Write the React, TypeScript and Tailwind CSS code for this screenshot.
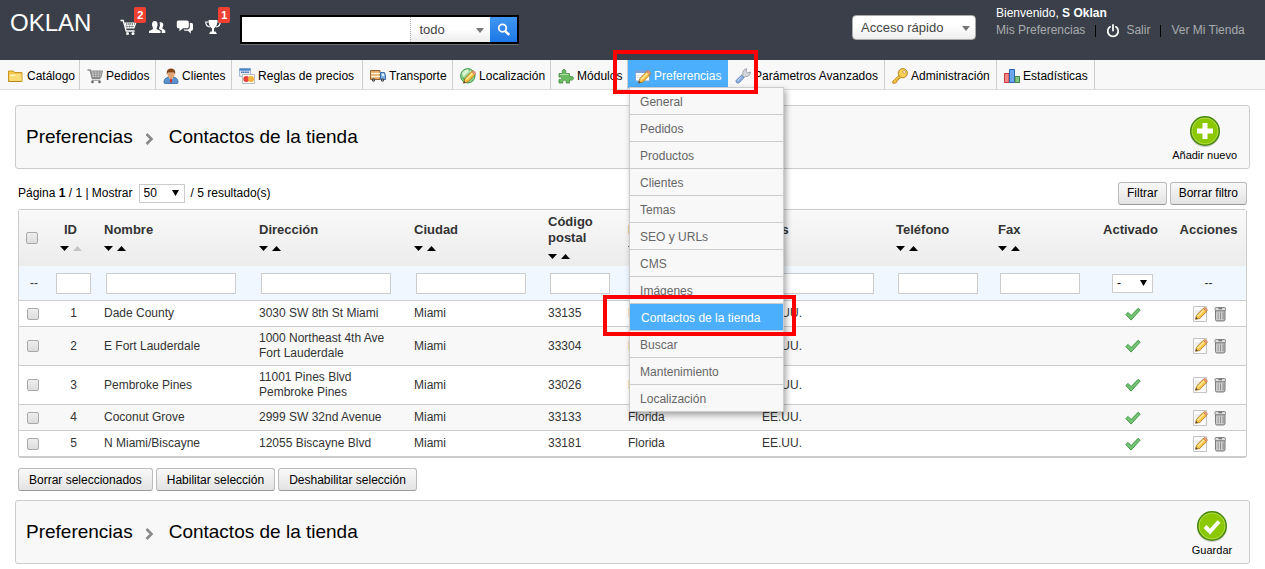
import { useState } from 'react';
import type { ReactNode } from 'react';

interface Contact {
    id: number;
    name: string;
    address: string[];
    city: string;
    zip: string;
    state: string;
    country: string;
}

const contacts: Contact[] = [
    { id: 1, name: 'Dade County', address: ['3030 SW 8th St Miami'], city: 'Miami', zip: '33135', state: 'Florida', country: 'EE.UU.' },
    { id: 2, name: 'E Fort Lauderdale', address: ['1000 Northeast 4th Ave', 'Fort Lauderdale'], city: 'Miami', zip: '33304', state: 'Florida', country: 'EE.UU.' },
    { id: 3, name: 'Pembroke Pines', address: ['11001 Pines Blvd', 'Pembroke Pines'], city: 'Miami', zip: '33026', state: 'Florida', country: 'EE.UU.' },
    { id: 4, name: 'Coconut Grove', address: ['2999 SW 32nd Avenue'], city: 'Miami', zip: '33133', state: 'Florida', country: 'EE.UU.' },
    { id: 5, name: 'N Miami/Biscayne', address: ['12055 Biscayne Blvd'], city: 'Miami', zip: '33181', state: 'Florida', country: 'EE.UU.' },
];

const columns = [
    { label: 'Nombre', input: 'w-[130px]' },
    { label: 'Dirección', input: 'w-[130px]' },
    { label: 'Ciudad', input: 'w-[110px]' },
    { label: 'Código postal', input: 'w-[60px]' },
    { label: 'Estado', input: 'w-[110px]' },
    { label: 'País', input: 'w-[110px]' },
    { label: 'Teléfono', input: 'w-[80px]' },
    { label: 'Fax', input: 'w-[80px]' },
];

const submenu = [
    'General', 'Pedidos', 'Productos', 'Clientes', 'Temas', 'SEO y URLs',
    'CMS', 'Imágenes', 'Contactos de la tienda', 'Buscar', 'Mantenimiento', 'Localización',
];

/* Icons */

const Icon = ({ children, className = 'size-4' }: { children: ReactNode; className?: string }) => (
    <svg viewBox="0 0 16 16" className={`${className} shrink-0`} aria-hidden="true">{children}</svg>
);

const FolderIcon = () => (
    <Icon>
        <path d="M.5 13.500v-10.500h5l1 1.500h7.500v9z" fill="#f5c84c" stroke="#c9952a" />
        <path d="M2 6.500h11v6H2z" fill="#fff6c9" />
        <path d="M1.500 13V8h5L8 6.500h5.500V13z" fill="#fbdc74" />
        <path d="M.5 13.500H14" stroke="#b98720" />
    </Icon>
);

const CartIcon = () => (
    <Icon>
        <path d="M.5 2h2.600l2.200 8.500h8" fill="none" stroke="#888" strokeWidth="1.300" />
        <path d="M3.700 3H15.500l-1.700 6.500H5.300z" fill="#d5d5d5" stroke="#888" />
        <path d="M4 5h11M4.600 7.200h10M7 3l.7 6.500M10 3v6.500M13 3l-.8 6.500" stroke="#888" strokeWidth=".8" />
        <path d="M4.500 12.500h9" stroke="#aaa" />
        <circle cx="5.500" cy="14" r="1.300" fill="#666" />
        <circle cx="12.500" cy="14" r="1.300" fill="#666" />
    </Icon>
);

const CustomerIcon = () => (
    <Icon>
        <path d="M1 14.500c0-4 2.500-5.500 7-5.500s7 1.500 7 5.500c0 .7-.5 1-1.200 1H2.200c-.7 0-1.200-.3-1.200-1z" fill="#5b93cf" stroke="#2f649f" strokeWidth=".8" />
        <path d="M6 9l2 5 2-5z" fill="#fff" />
        <path d="M7.400 10h1.200l.6 3.500L8 15l-1.200-1.500z" fill="#c33" />
        <path d="M4.500 4.500h7v2.700C11.500 9 10 10.500 8 10.500S4.500 9 4.500 7.200z" fill="#e0a573" />
        <path d="M3.800 6.500V4C4 1.800 5.500.6 8 .6s4 1.200 4.200 3.400v2.500l-1.200-2H5z" fill="#8a4516" />
    </Icon>
);

const PriceRulesIcon = () => (
    <Icon>
        <path d="M.5 .5h11v8H.5z" fill="#e8eef7" stroke="#a9bcd8" />
        <path d="M.5 .5h11v2.200H.5z" fill="#4a86cc" />
        <path d="M2 4.200h8" stroke="#3c64a8" strokeWidth="1.400" strokeDasharray="1.500 .6" />
        <path d="M3.500 6.500h12v9h-12z" fill="#fffdf3" stroke="#bbb" />
        <circle cx="7.300" cy="11" r="3" fill="#e8413c" />
        <circle cx="12" cy="11" r="3" fill="#f6b23e" />
    </Icon>
);

const TruckIcon = () => (
    <Icon>
        <path d="M.5 2.500h9.500v9H.5z" fill="#e3a968" stroke="#93642e" />
        <path d="M1 5.500h9M1 8.500h9" stroke="#fff1d2" strokeWidth="1.400" />
        <path d="M10.500 4.500h4l1 3.500v3.500h-5z" fill="#7fb0e6" stroke="#396ba5" />
        <path d="M12 5.500h1.800l.7 2.500H12z" fill="#e5f2ff" />
        <circle cx="3.500" cy="12" r="1.700" fill="#444" />
        <circle cx="12.500" cy="12" r="1.700" fill="#444" />
        <circle cx="3.500" cy="12" r=".6" fill="#ddd" />
        <circle cx="12.500" cy="12" r=".6" fill="#ddd" />
    </Icon>
);

const Pencil = () => (
    <>
        <path d="M3.500 15.200l1.300-4.500 7-7.200 3.300 3.100-7.200 7.300z" fill="#f7c443" stroke="#a36c1a" strokeWidth=".8" />
        <path d="M6.200 11.500L13 4.800" stroke="#ffe9a0" strokeWidth="1.400" />
        <path d="M11.600 3.900l1-1c.9-.8 3.600 1.700 2.900 2.700l-1 1.100z" fill="#eb9a77" stroke="#b96a3f" strokeWidth=".5" />
        <path d="M3.500 15.200l.6-2.200 1.700 1.500z" fill="#444" />
    </>
);

const GlobeIcon = () => (
    <Icon>
        <circle cx="7.800" cy="7.800" r="7.200" fill="#8fd08a" stroke="#3f9950" />
        <path d="M2 5c2-3 4-3.500 6-3.500L9 4 6 6.500 3.500 9zM10 2.500l3.500 3-1 3-3-1z" fill="#d9f2cf" />
        <path d="M2 9.500l4 1-1 3z" fill="#4fae56" />
        <Pencil />
    </Icon>
);

const PuzzleIcon = () => (
    <Icon>
        <path d="M1 5.500h3.600C3.500 3 4.500 1.500 6 1.500S8.500 3 7.600 5.500h3.900v3.300c2.200-1 4 0 4 1.500s-1.800 2.400-4 1.500V15H8c.8-1.800 0-2.800-1.500-2.800S4.200 13.300 5 15H1v-3.500c2 .5 2.800-.2 2.800-1.200S2.800 8.700 1 9.200z" fill="#6dbb62" stroke="#3f8a3d" strokeWidth=".8" />
        <path d="M2 6.500h8.500" stroke="#b4e2a8" />
    </Icon>
);

const PreferencesIcon = () => (
    <Icon>
        <path d="M.5 2.500h14v10.500H.5z" fill="#fdfdfd" stroke="#7ea6d6" />
        <path d="M.5 2h14v3H.5z" fill="#6ea2e0" />
        <path d="M2 7.500h6M2 9.500h5" stroke="#ddd" />
        <Pencil />
    </Icon>
);

const WrenchIcon = () => (
    <Icon>
        <path d="M8 6.500c-.8-2.600.8-5.300 3.700-5.800L11 3.500l1.600 1.400 2.700-.9c.3 3-2.300 5-4.800 4.300L9 9.500 6.800 7.500z" fill="#d6d9de" stroke="#8a8f98" strokeWidth=".8" />
        <path d="M6.600 7.200l2.400 2.300-4.600 5c-1.900 1.700-4.400-.5-3-2.500z" fill="#88ace0" stroke="#5379b4" strokeWidth=".8" />
        <path d="M6.500 8.700l-4 4.200" stroke="#cfe0f8" />
    </Icon>
);

const KeyIcon = () => (
    <Icon>
        <path d="M8.200 6.300l2 2-2.200 2.200H6.500V12H5v1.700l-1.500 1.500H.8v-2z" fill="#f6c544" stroke="#b07a18" strokeWidth=".8" />
        <circle cx="10.800" cy="5.200" r="4.600" fill="#f9cf55" stroke="#b07a18" strokeWidth=".9" />
        <circle cx="12.200" cy="3.900" r="1.300" fill="#fff" stroke="#b07a18" strokeWidth=".6" />
    </Icon>
);

const StatsIcon = () => (
    <Icon>
        <path d="M.5 5.500h4.500v9H.5z" fill="#f48888" stroke="#c93c3c" />
        <path d="M5.500 1.500H10.500v13H5.500z" fill="#6aa6ee" stroke="#2b62ae" />
        <path d="M11 8.500h4.500v6H11z" fill="#84c684" stroke="#3f8547" />
    </Icon>
);

const CheckIcon = () => (
    <Icon>
        <path d="M.8 8.600l2.300-2.200 3 3.200 7-7.300 2.100 1.800-9.100 10z" fill="#72c472" stroke="#3a8f42" strokeWidth=".9" />
    </Icon>
);

const EditIcon = () => (
    <Icon>
        <path d="M1.500 .5h13v15h-13z" fill="#fbfbfb" stroke="#c4c4c4" />
        <path d="M3 5h5M3 7h3" stroke="#e0e0e0" />
        <path d="M3.500 13.300l1-4 6.800-7 3.500 3.200-7.100 7z" fill="#f9c64a" stroke="#a36c1a" strokeWidth=".8" />
        <path d="M5.800 10.200L12.500 3.600" stroke="#ffe9a0" strokeWidth="1.400" />
        <path d="M11.200 2.500l.9-.9c.9-.8 3.900 1.900 3.300 2.900l-1 1z" fill="#ee9f76" stroke="#b96a3f" strokeWidth=".5" />
        <path d="M3.500 13.300l.5-2.200 1.900 1.700z" fill="#444" />
    </Icon>
);

const TrashIcon = () => (
    <Icon>
        <path d="M3.500 3.500h9.500V13.500c0 1-.8 1.500-1.800 1.500H5.300c-1.200 0-1.800-.5-1.800-1.500z" fill="#b9b9b9" stroke="#6f6f6f" strokeWidth=".9" />
        <rect x="3" y="1.500" width="10.500" height="3.200" rx="1.200" fill="#dedede" stroke="#777" strokeWidth=".9" />
        <path d="M6.500 2.700h3.500" stroke="#555" />
        <path d="M6 6.500v6.500M8.500 6.500v6.500M11 6.500v6.500" stroke="#858585" strokeWidth=".9" />
        <path d="M5 6v8M7.300 6v8M9.800 6v8" stroke="#e6e6e6" strokeWidth=".8" />
    </Icon>
);

const HeaderCartIcon = () => (
    <svg viewBox="0 0 18 18" className="size-[18px]" aria-hidden="true">
        <path d="M.5 2.500h2.700l3 10.500h8.500" fill="none" stroke="#fff" strokeWidth="1.300" />
        <path d="M4.500 4.500h12l-2 6H6z" fill="#fff" />
        <path d="M6 6h9M6.500 8.500h8" stroke="#3a3f49" strokeDasharray="1 1" />
        <path d="M7 5v5M9.500 5v5M12 5v5" stroke="#3a3f49" strokeWidth=".4" />
        <circle cx="7.500" cy="15.500" r="1.500" fill="#fff" />
        <circle cx="13" cy="15.500" r="1.500" fill="#fff" />
    </svg>
);

const HeaderPeopleIcon = () => (
    <svg viewBox="0 0 18 18" className="size-[18px]" fill="#fff" aria-hidden="true">
        <path d="M1 15v-2c1.500-.8 3-1.500 4-2 .5-1-1-2.300-1-4.500C4 4 5.200 3 6.800 3s2.800 1 2.800 3.500c0 2.200-1.400 3.500-1 4.500 1 .5 2.900 1.200 3.900 2v2z" />
        <path d="M11.500 4.500c2.300-.9 4 .5 3.800 2.500-.1 1.600-1.200 2.500-.9 3.500.9.700 2.300 1.500 2.900 2.300V15h-3.500v-2.600l-2.800-1.500c-.3-.8.900-2 1-3.900z" />
    </svg>
);

const HeaderChatIcon = () => (
    <svg viewBox="0 0 18 18" className="size-[18px]" fill="#fff" aria-hidden="true">
        <path d="M2.500 2.500h8.500c1 0 1.800.8 1.800 1.800v4.200c0 1-.8 1.800-1.800 1.800H7l-3.500 3v-3h-1c-1 0-1.700-.8-1.700-1.800V4.300c0-1 .7-1.800 1.700-1.800z" />
        <path d="M13.800 5h1.500c1 0 1.700.7 1.700 1.700v4.300c0 1-.7 1.700-1.700 1.700h-.5V15.500l-3-2.800H8.500l-1-1.200h3.800c1.500 0 2.500-1 2.500-2.500z" />
    </svg>
);

const HeaderTrophyIcon = () => (
    <svg viewBox="0 0 18 18" className="size-[18px]" fill="#fff" aria-hidden="true">
        <path d="M4.500 2h9c0 4-1 7-3.500 8.500v3h1.500l1.500 2.500H5l1.500-2.500H8v-3C5.500 9 4.500 6 4.500 2z" />
        <path d="M4.500 4H1.700c.1 3 1.500 4.700 4.300 5M13.500 4h2.800c-.1 3-1.500 4.700-4.300 5" fill="none" stroke="#fff" strokeWidth="1.200" />
    </svg>
);

const PowerIcon = () => (
    <Icon className="size-[14px]">
        <path d="M4.700 3.200a6 6 0 1 0 6.600 0" fill="none" stroke="#fff" strokeWidth="2" strokeLinecap="round" />
        <path d="M8 1v6.500" stroke="#fff" strokeWidth="2" strokeLinecap="round" />
    </Icon>
);

const SearchIcon = () => (
    <Icon className="size-[14px]">
        <circle cx="6.300" cy="5.800" r="4.300" fill="none" stroke="#fff" strokeWidth="2" />
        <path d="M9.500 9.200l4.500 4.500" stroke="#fff" strokeWidth="2.800" />
    </Icon>
);

const RoundIcon = ({ children }: { children: ReactNode }) => (
    <svg viewBox="0 0 32 32" className="size-8" aria-hidden="true">
        <ellipse cx="16" cy="17.500" rx="15" ry="14.500" fill="#ccc" />
        <circle cx="16" cy="16" r="15" fill="#458807" />
        <circle cx="16" cy="16" r="13.500" fill="#b4dc4e" />
        <circle cx="16" cy="16" r="12.500" fill="#8cc800" />
        {children}
    </svg>
);

const ChevronIcon = () => (
    <svg viewBox="0 0 9 12" className="mt-1 h-3 w-[9px]" aria-hidden="true">
        <path d="M1.500 1l5 5-5 5" fill="none" stroke="#888" strokeWidth="2.600" />
    </svg>
);

/* Shared bits */

const SortArrows = ({ sorted = false }: { sorted?: boolean }) => (
    <svg viewBox="0 0 22 5" className="mt-2 mb-1 block h-[5px] w-[22px]" aria-hidden="true">
        <path d="M0 0h9L4.500 5z" fill="#000" />
        <path d="M13 5h9L17.500 0z" fill={sorted ? '#c4c4c4' : '#000'} />
    </svg>
);

const Button = ({ children, className = 'px-2' }: { children: ReactNode; className?: string }) => (
    <button
        type="button"
        className={`h-[23px] rounded-[3px] border border-[#bbb] border-b-[#999] bg-linear-to-b from-[#f9f9f9] to-[#e3e3e3] text-black ${className}`}
    >
        {children}
    </button>
);

const Checkbox = ({ label }: { label: string }) => (
    <input
        type="checkbox"
        aria-label={label}
        className="block size-3 appearance-none rounded-[2px] border border-[#a9a9a9] bg-linear-to-b from-[#eee] to-[#dcdcdc] checked:from-[#4baffe] checked:to-[#4baffe]"
    />
);

const SmallSelect = ({ label, options, className }: { label: string; options: string[]; className: string }) => (
    <span className="relative inline-block align-middle">
        <select aria-label={label} className={`block h-[19px] appearance-none border border-[#ccc] bg-white pl-1 text-black ${className}`}>
            {options.map((option) => (
                <option key={option}>{option}</option>
            ))}
        </select>
        <svg viewBox="0 0 7 6" className="pointer-events-none absolute top-[6px] right-[6px] h-[6px] w-[7px]" aria-hidden="true">
            <path d="M0 0h7L3.500 6z" fill="#000" />
        </svg>
    </span>
);

const CaretDown = () => (
    <svg viewBox="0 0 8 5" className="pointer-events-none absolute top-1/2 right-[6px] -mt-[2px] h-[5px] w-2" aria-hidden="true">
        <path d="M0 0h8L4 5z" fill="#777" />
    </svg>
);

const NavItem = ({ icon, label, width }: { icon: ReactNode; label: string; width: string }) => (
    <li className={`border-r border-[#ccc] ${width}`}>
        <a href="#" className="flex h-[29px] items-center gap-[3px] pt-[2px] pr-1 pl-[7px] text-black">
            {icon}
            {label}
        </a>
    </li>
);

const TitleBar = ({ icon, action }: { icon: ReactNode; action: string }) => (
    <div className="flex h-16 items-center justify-between rounded-[3px] border border-[#ccc] bg-[#f8f8f8] pr-3 pl-[10px] text-black">
        <h2 className="flex items-center text-[19px]">
            Preferencias
            <span className="mr-[15px] ml-3">
                <ChevronIcon />
            </span>
            Contactos de la tienda
        </h2>
        <button type="button" className="flex min-w-[50px] flex-col items-center pt-1 text-[11px] leading-4">
            {icon}
            {action}
        </button>
    </div>
);

const HeaderBar = () => (
    <header className="flex h-[60px] items-start bg-[#3a3f49] pl-[10px] text-[13px]">
        <a href="#" className="pt-[7px] text-2xl text-white">OKLAN</a>
        <div className="mt-[18px] ml-[29px] flex gap-[10px]">
            <a href="#" className="relative" aria-label="Pedidos nuevos">
                <HeaderCartIcon />
                <span className="absolute -top-[11px] left-[14px] h-4 w-3 rounded-[2px] bg-[#ef4031] text-center text-[11px] leading-4 font-bold text-white">2</span>
            </a>
            <a href="#" aria-label="Clientes nuevos"><HeaderPeopleIcon /></a>
            <a href="#" aria-label="Mensajes"><HeaderChatIcon /></a>
            <a href="#" className="relative" aria-label="Logros">
                <HeaderTrophyIcon />
                <span className="absolute -top-[11px] left-[14px] h-4 w-3 rounded-[2px] bg-[#ef4031] text-center text-[11px] leading-4 font-bold text-white">1</span>
            </a>
        </div>
        <form className="mt-[15px] ml-[18px] flex h-[29px] border-2 border-black bg-white shadow-[0_1px_0_#6b6b6b]">
            <input type="text" aria-label="Buscar" className="w-[168px] px-2 outline-none" />
            <span className="relative border-l border-dotted border-[#aaa] bg-linear-to-b from-white from-50% to-[#ececec]">
                <select aria-label="Buscar en" className="h-full w-[79px] appearance-none pl-2 text-[#444]">
                    <option>todo</option>
                </select>
                <CaretDown />
            </span>
            <button type="button" aria-label="Buscar" className="flex w-[27px] items-center justify-center bg-linear-to-b from-[#3f95ef] to-[#1d78e6]">
                <SearchIcon />
            </button>
        </form>
        <span className="relative mt-[15px] mr-5 ml-auto">
            <select aria-label="Acceso rápido" className="block h-[25px] w-[124px] appearance-none rounded-[4px] border border-[#aaa] bg-linear-to-b from-white from-40% to-[#eee] pl-2 text-[#444]">
                <option>Acceso rápido</option>
            </select>
            <CaretDown />
        </span>
        <div className="w-[269px] pt-[5px] text-xs leading-[17px]">
            <p className="text-white">Bienvenido, <b>S Oklan</b></p>
            <p className="flex items-center text-[#a9abb0]">
                <a href="#">Mis Preferencias</a>
                <span className="mx-[10px] h-3 w-px bg-black" />
                <PowerIcon />
                <a href="#" className="ml-[6px]">Salir</a>
                <span className="mx-[10px] h-3 w-px bg-black" />
                <a href="#">Ver Mi Tienda</a>
            </p>
        </div>
    </header>
);

const PreferencesMenu = () => (
    <li className="relative min-w-[100px]">
        <a href="#" className="flex h-7 items-center gap-[3px] bg-[#4baffe] pt-1 pr-1 pl-[7px] text-white">
            <PreferencesIcon />
            Preferencias
        </a>
        <ul className="absolute top-[27px] left-px z-10 w-[155px] border border-[#ccc] bg-[#f8f8f8] shadow-[2px_3px_6px_rgba(0,0,0,0.35)]">
            {submenu.map((item) => (
                <li key={item} className="relative border-b border-[#ccc] last:border-b-0">
                    {item === 'Contactos de la tienda' ? (
                        <>
                            <a href="#" className="block h-[26px] bg-[#4baffe] pl-[11px] leading-[28px] text-white">{item}</a>
                            <span className="pointer-events-none absolute -top-[9px] -right-[13px] -left-[27px] h-[41px] border-4 border-[#f00]" />
                        </>
                    ) : (
                        <a href="#" className="block h-[26px] pl-[10px] leading-[28px] text-[#666]">{item}</a>
                    )}
                </li>
            ))}
        </ul>
        <span className="pointer-events-none absolute -top-[10px] -right-[30px] -left-[15px] z-20 h-11 border-4 border-[#f00]" />
    </li>
);

const App = () => {
    const [pageSize] = useState('50');

    return (
        <div className="bg-white font-['Liberation_Sans',Arial,sans-serif] text-xs text-[#333]">
            <HeaderBar />
            <nav className="border-b border-[#ddd] bg-[#f8f8f8] pl-px">
                <ul className="flex whitespace-nowrap">
                    <NavItem icon={<FolderIcon />} label="Catálogo" width="min-w-[79px]" />
                    <NavItem icon={<CartIcon />} label="Pedidos" width="min-w-[76px]" />
                    <NavItem icon={<CustomerIcon />} label="Clientes" width="min-w-[76px]" />
                    <NavItem icon={<PriceRulesIcon />} label="Reglas de precios" width="min-w-[131px]" />
                    <NavItem icon={<TruckIcon />} label="Transporte" width="min-w-[90px]" />
                    <NavItem icon={<GlobeIcon />} label="Localización" width="min-w-[98px]" />
                    <NavItem icon={<PuzzleIcon />} label="Módulos" width="min-w-[77px]" />
                    <PreferencesMenu />
                    <NavItem icon={<WrenchIcon />} label="Parámetros Avanzados" width="min-w-[157px]" />
                    <NavItem icon={<KeyIcon />} label="Administración" width="min-w-[112px]" />
                    <NavItem icon={<StatsIcon />} label="Estadísticas" width="min-w-[98px]" />
                </ul>
            </nav>

            <main className="px-[15px] pt-[15px] pb-[5px]">
                <TitleBar
                    action="Añadir nuevo"
                    icon={<RoundIcon><path d="M16 8v16M8 16h16" stroke="#fff" strokeWidth="5" /></RoundIcon>}
                />

                <div className="mx-[3px] flex h-10 items-center justify-between pt-2 text-black">
                    <div className="flex items-center gap-[6px]">
                        <span>Página <b>1</b> / 1 | Mostrar</span>
                        <SmallSelect label="Mostrar" options={[pageSize]} className="w-[46px]" />
                        <span>/ 5 resultado(s)</span>
                    </div>
                    <div className="flex gap-[3px]">
                        <Button>Filtrar</Button>
                        <Button>Borrar filtro</Button>
                    </div>
                </div>

                {/* Contacts table */}
                <div className="mx-[3px] rounded-[3px] border border-b-2 border-[#ccc]">
                    <table className="w-full table-fixed border-separate border-spacing-0 text-left leading-[15px]">
                        <colgroup>
                            <col className="w-[30px]" />
                            <col className="w-[49px]" />
                            <col className="w-[155px]" />
                            <col className="w-[155px]" />
                            <col className="w-[134px]" />
                            <col className="w-[80px]" />
                            <col className="w-[134px]" />
                            <col className="w-[134px]" />
                            <col className="w-[102px]" />
                            <col className="w-[102px]" />
                            <col className="w-[77px]" />
                            <col className="w-[75px]" />
                        </colgroup>
                        <thead>
                            <tr className="h-14 bg-linear-to-b from-[#f9f9f9] to-[#ececec] text-[13px] leading-4">
                                <th className="pl-[7px]"><Checkbox label="Seleccionar todo" /></th>
                                <th>
                                    <span className="flex flex-col items-center pr-[6px]">
                                        ID
                                        <SortArrows sorted />
                                    </span>
                                </th>
                                {columns.map((column) => (
                                    <th key={column.label} className="pr-1 pl-[6px]">
                                        {column.label}
                                        <SortArrows />
                                    </th>
                                ))}
                                <th className="pr-1 pb-4 text-center">Activado</th>
                                <th className="pb-4 text-center">Acciones</th>
                            </tr>
                        </thead>
                        <tbody>
                            <tr className="h-[35px] bg-[#f0f7fe] *:border-b *:border-[#ccc]">
                                <td className="text-center">--</td>
                                <td className="pl-[7px]">
                                    <input type="text" aria-label="Filtrar ID" className="block h-[21px] w-[35px] border border-[#ccc] bg-white px-1" />
                                </td>
                                {columns.map((column) => (
                                    <td key={column.label} className="pl-2">
                                        <input type="text" aria-label={`Filtrar ${column.label}`} className={`block h-[21px] border border-[#ccc] bg-white px-1 ${column.input}`} />
                                    </td>
                                ))}
                                <td className="text-center">
                                    <SmallSelect label="Filtrar activado" options={['-', 'Sí', 'No']} className="w-[41px]" />
                                </td>
                                <td className="text-center">--</td>
                            </tr>
                            {contacts.map((contact) => (
                                <tr key={contact.id} className="h-[26px] even:bg-white odd:bg-[#f8f8f8] *:border-b *:border-[#ccc] last:h-[25px] last:*:border-b-0">
                                    <td className="pl-2"><Checkbox label={`Seleccionar ${contact.name}`} /></td>
                                    <td className="text-center">{contact.id}</td>
                                    <td className="pl-[6px]">{contact.name}</td>
                                    <td className="py-1 pl-[6px]">
                                        {contact.address.map((line) => (
                                            <div key={line}>{line}</div>
                                        ))}
                                    </td>
                                    <td className="pl-[6px]">{contact.city}</td>
                                    <td className="pl-[6px]">{contact.zip}</td>
                                    <td className="pl-[6px]">{contact.state}</td>
                                    <td className="pl-[6px]">{contact.country}</td>
                                    <td />
                                    <td />
                                    <td>
                                        <button type="button" aria-label="Activado" className="mx-auto block"><CheckIcon /></button>
                                    </td>
                                    <td>
                                        <span className="flex justify-center gap-1 pl-[3px]">
                                            <button type="button" aria-label="Editar"><EditIcon /></button>
                                            <button type="button" aria-label="Borrar"><TrashIcon /></button>
                                        </span>
                                    </td>
                                </tr>
                            ))}
                        </tbody>
                    </table>
                </div>

                <div className="mx-[3px] mt-[10px] mb-[9px] flex gap-[3px]">
                    <Button className="px-[10px]">Borrar seleccionados</Button>
                    <Button className="px-[10px]">Habilitar selección</Button>
                    <Button className="px-[10px]">Deshabilitar selección</Button>
                </div>

                <TitleBar
                    action="Guardar"
                    icon={<RoundIcon><path d="M9 16.500l5 5 9-10" fill="none" stroke="#fff" strokeWidth="4" /></RoundIcon>}
                />
            </main>
        </div>
    );
};

export default App;
